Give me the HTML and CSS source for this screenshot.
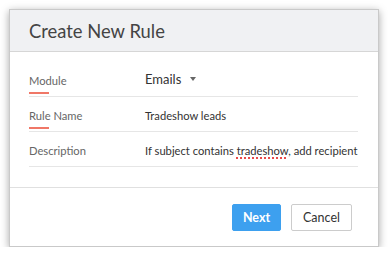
FILE: index.html
```html
<!DOCTYPE html>
<html lang="en">
<head>
    <meta charset="UTF-8">
    <title>Create New Rule</title>
    <link rel="stylesheet" href="styles.css">
</head>
<body>
    <div class="dialog">
        <div class="dialog-header">
            <h1>Create New Rule</h1>
        </div>

        <div class="dialog-body">
            <div class="field-row">
                <div class="field-label required">Module</div>
                <div class="field-value module-value">
                    Emails
                    <span class="caret"></span>
                </div>
            </div>
            <div class="field-row">
                <div class="field-label required">Rule Name</div>
                <div class="field-value">Tradeshow leads</div>
            </div>
            <div class="field-row">
                <div class="field-label">Description</div>
                <div class="field-value">If subject contains <span class="misspelled">tradeshow</span>, add recipient</div>
            </div>
        </div>

        <div class="dialog-footer">
            <button class="btn btn-primary">Next</button>
            <button class="btn btn-default">Cancel</button>
        </div>
    </div>
</body>
</html>
```

FILE: styles.css
```css
body {
    margin: 0;
    background: #ffffff;
    font-family: Lato, "Open Sans", sans-serif;
    color: #333333;
}

.dialog {
    width: 368px;
    margin: 9px 0 0 9px;
    border: 1px solid #c9c9c9;
    background: #ffffff;
    box-shadow: 0 2px 8px rgba(0, 0, 0, 0.35);
}

.dialog-header {
    height: 41px;
    background: #f0f1f3;
    border-bottom: 1px solid #d6d6d6;
    padding-left: 19px;
    display: flex;
    align-items: center;
}

h1 {
    margin: 0;
    font-size: 18.4px;
    font-weight: normal;
    color: #444444;
}

.dialog-body {
    padding: 10px 20px 20px 19px;
}

.field-row {
    box-sizing: border-box;
    height: 35px;
    padding-bottom: 9px;
    border-bottom: 1px solid #e6e6e6;
    display: flex;
    align-items: flex-end;
}

.field-label {
    width: 116px;
    flex-shrink: 0;
    font-size: 11.2px;
    color: #666666;
    position: relative;
}

.field-label.required::after {
    content: "";
    position: absolute;
    left: 0;
    bottom: -7px;
    width: 20px;
    height: 2px;
    background: #f07767;
}

.field-value {
    font-size: 11.2px;
    color: #333333;
    white-space: nowrap;
}

.module-value {
    font-size: 13px;
    display: flex;
    align-items: center;
}

.caret {
    margin-left: 9px;
    width: 0;
    height: 0;
    border-left: 3.5px solid transparent;
    border-right: 3.5px solid transparent;
    border-top: 4px solid #666666;
}

.misspelled {
    text-decoration: underline dotted #e84a4a;
    text-decoration-thickness: 1.5px;
    text-underline-offset: 2px;
}

.dialog-footer {
    border-top: 1px solid #e0e0e0;
    height: 58px;
    padding-right: 26px;
    display: flex;
    align-items: center;
    justify-content: flex-end;
    gap: 10px;
}

.btn {
    height: 27px;
    font-family: Lato, "Open Sans", sans-serif;
    font-size: 12.5px;
    border-radius: 2px;
    cursor: pointer;
}

.btn-primary {
    width: 49px;
    background: #3da0ef;
    border: 1px solid #3da0ef;
    color: #ffffff;
    font-weight: bold;
}

.btn-default {
    width: 61px;
    background: #ffffff;
    border: 1px solid #cccccc;
    color: #333333;
}
```
